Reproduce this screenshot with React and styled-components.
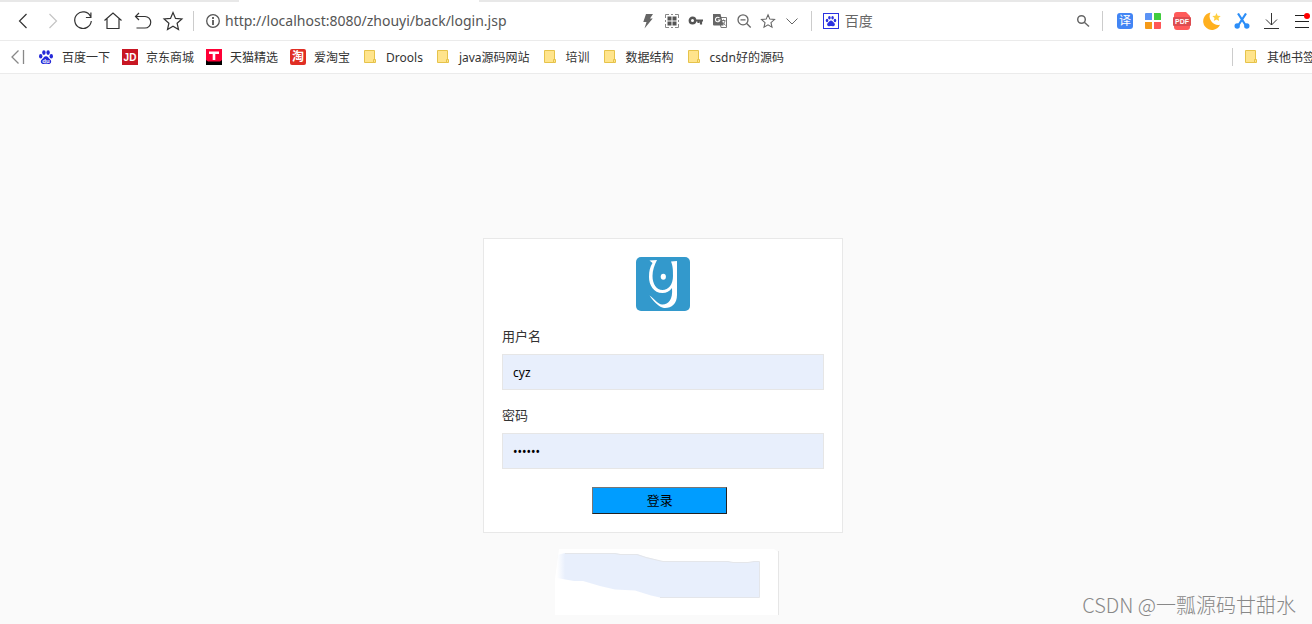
import React, { useState } from "react";
import styled, { createGlobalStyle } from "styled-components";

const navButtons = [
    { name: "后退", d: "M14.500 4 7.500 11l7 7" },
    { name: "前进", d: "M7.500 4l7 7-7 7", faded: true },
    { name: "刷新", d: "M18.500 6.500A8.300 8.300 0 1 0 19.300 11M18.900 2.500v5h-5" },
    { name: "主页", d: "M2.500 10.500 11 3l8.500 7.500M5 8.500V18.500h12V8.500" },
    { name: "恢复", d: "M7 3 3.500 6.500 7 10M3.500 6.500h9.500a5.700 5.700 0 0 1 0 11.500H4.500" },
    { name: "收藏", d: "M11 2.500l2.500 5.900 6.400.6-4.800 4.200 1.400 6.300-5.500-3.300-5.500 3.300 1.400-6.300L2.100 9l6.400-.6z" },
];

const bookmarks = [
    { text: "百度一下", icon: "baidu" },
    { text: "京东商城", icon: "jd" },
    { text: "天猫精选", icon: "tmall" },
    { text: "爱淘宝", icon: "taobao" },
    { text: "Drools", icon: "folder" },
    { text: "java源码网站", icon: "folder" },
    { text: "培训", icon: "folder" },
    { text: "数据结构", icon: "folder" },
    { text: "csdn好的源码", icon: "folder" },
];

const Paw = () => (
    <g>
        <ellipse cx="2.700" cy="7.300" rx="1.700" ry="2.200" />
        <ellipse cx="5.900" cy="3.600" rx="1.700" ry="2.300" />
        <ellipse cx="10.100" cy="3.600" rx="1.700" ry="2.300" />
        <ellipse cx="13.300" cy="7.300" rx="1.700" ry="2.200" />
        <path d="M8 7.200c2 0 2.400 1.700 3.700 2.900 1.500 1.300 1.800 2.400 1.200 3.600-.8 1.600-2.800 1.200-4.900 1.100-2.100.1-4.100.5-4.900-1.100-.6-1.200-.3-2.300 1.200-3.600C5.600 8.900 6 7.200 8 7.200z" />
    </g>
);

const SiteIcon = ({ name }) => {
    if (name === "baidu") {
        return (
            <Icon viewBox="0 0 16 16" fill="#2529d8">
                <Paw />
                <IconText x="8" y="14" fontSize="6" fill="#fff">du</IconText>
            </Icon>
        );
    }
    if (name === "jd") {
        return (
            <Icon viewBox="0 0 16 16">
                <rect width="16" height="16" fill="#c81623" />
                <IconText x="8" y="12" fontSize="10" fill="#fff">JD</IconText>
            </Icon>
        );
    }
    if (name === "tmall") {
        return (
            <Icon viewBox="0 0 16 16">
                <rect width="16" height="16" fill="#ff0036" />
                <path d="M0 16v-5l2 1.500h12l2-1.500v5z" fill="#000" />
                <path d="M3 2.500h10v2.500H9.300V11H6.700V5H3z" fill="#fff" />
            </Icon>
        );
    }
    if (name === "taobao") {
        return (
            <Icon viewBox="0 0 16 16">
                <rect width="16" height="16" rx="2" fill="#e02e24" />
                <IconText x="8" y="12" fontSize="12" fill="#fff">淘</IconText>
            </Icon>
        );
    }
    return (
        <Icon viewBox="0 0 16 16">
            <path d="M2.500 1.500h10v12h-10z" fill="#ffe48c" stroke="#e6c34a" />
            <path d="M11.500 10.500h2v3h-2z" fill="#ffe48c" stroke="#e6c34a" />
        </Icon>
    );
};

const AddressTools = () => (
    <Tools>
        <ToolButton aria-label="极速模式">
            <Icon viewBox="0 0 16 16" fill="#666">
                <path d="M6 1h7l-3 4.600h2.700L4.500 15.500l2-6.500H3.300z" />
            </Icon>
        </ToolButton>
        <ToolButton aria-label="二维码">
            <Icon viewBox="0 0 16 16" fill="none" stroke="#888">
                <path d="M1.500 5V1.500H5M11 1.500h3.500V5M14.500 11v3.500H11M5 14.500H1.500V11M7 1.500h2M7 14.500h2M1.500 7v2M14.500 7v2" />
                <path fill="#555" stroke="none" d="M3.500 3.500h4v4h-4zM8.500 3.500h4v4h-4zM3.500 8.500h4v4h-4zM8.500 8.500h4v4h-4z" />
            </Icon>
        </ToolButton>
        <ToolButton aria-label="密码">
            <Icon viewBox="0 0 16 16" fill="none" stroke="#555">
                <circle cx="4.500" cy="7.500" r="2.700" strokeWidth="2.400" />
                <path d="M7.500 7.500H15M13 8v3.500M10.500 8v2" strokeWidth="2.200" />
            </Icon>
        </ToolButton>
        <ToolButton aria-label="翻译">
            <Icon viewBox="0 0 16 16">
                <path d="M7 4.500h7.500v10H9z" fill="#fff" stroke="#777" />
                <path d="M1 1h7.500l3 11.500H2a1 1 0 0 1-1-1z" fill="#666" />
                <path d="M7.500 5A2.300 2.300 0 1 0 8 7H5.800" fill="none" stroke="#fff" strokeWidth="1.100" />
                <path d="M9.500 7.500h4M11.500 6.500v1M13 8c-.5 2-1.500 3-2.500 4M10.500 9l3 3.500" fill="none" stroke="#777" />
            </Icon>
        </ToolButton>
        <ToolButton aria-label="缩小">
            <Icon viewBox="0 0 16 16" fill="none" stroke="#666" strokeWidth="1.300">
                <circle cx="7" cy="6.800" r="5" />
                <path d="M4.500 6.800h5M10.700 10.500l4 4" />
            </Icon>
        </ToolButton>
        <ToolButton aria-label="收藏此页">
            <Icon viewBox="0 0 22 22" fill="none" stroke="#666" strokeWidth="1.500">
                <path d={navButtons[5].d} />
            </Icon>
        </ToolButton>
        <ToolButton aria-label="更多">
            <Icon viewBox="0 0 16 16" fill="none" stroke="#666">
                <path d="M2.500 5.500 8 11l5.500-5.500" />
            </Icon>
        </ToolButton>
    </Tools>
);

const Extensions = () => (
    <ExtensionBar>
        <ToolButton $compact aria-label="翻译网页">
            <Icon viewBox="0 0 16 16">
                <rect width="16" height="16" rx="3" fill="#4285f4" />
                <IconText $regular x="8" y="12" fontSize="12" fill="#fff">译</IconText>
            </Icon>
        </ToolButton>
        <ToolButton $compact aria-label="应用">
            <Icon viewBox="0 0 16 16">
                <path d="M0 1a1 1 0 0 1 1-1h6v7H0z" fill="#5b93f5" />
                <path d="M9 0h6a1 1 0 0 1 1 1v6H9z" fill="#41cc3d" />
                <path d="M0 9h7v7H1a1 1 0 0 1-1-1z" fill="#f59a18" />
                <path d="M9 9h7v6a1 1 0 0 1-1 1H9z" fill="#ff5757" />
            </Icon>
        </ToolButton>
        <ToolButton aria-label="PDF 工具">
            <Icon $size={18} viewBox="0 0 18 18">
                <path d="M4 0h9l4 4v11a3 3 0 0 1-3 3H4a3 3 0 0 1-3-3V3a3 3 0 0 1 3-3z" fill="#ff5a5a" />
                <rect y="5" width="18" height="9" rx="1" fill="#dd4c50" />
                <IconText x="9" y="12" fontSize="7" fill="#fff">PDF</IconText>
            </Icon>
        </ToolButton>
        <ToolButton aria-label="夜间模式">
            <Icon $size={18} viewBox="0 0 18 18">
                <path d="M7.500.5A8.800 8.800 0 1 0 17 12.800 8.700 8.700 0 0 1 7.500.5z" fill="#ffb01f" />
                <path d="M13.500 1l1.200 2.700 3 .3-2.200 2 .7 3-2.700-1.600L10.800 9l.7-3-2.200-2 3-.3z" fill="#ffcf40" />
            </Icon>
        </ToolButton>
        <ToolButton aria-label="截图">
            <Icon viewBox="0 0 16 16" fill="none" stroke="#2c8ef8" strokeWidth="2.200">
                <path d="M4 .5 11.500 12M12 .5 4.500 12" />
                <circle cx="3.200" cy="13" r="2.700" fill="#2c8ef8" stroke="none" />
                <circle cx="12.800" cy="13" r="2.700" fill="#2c8ef8" stroke="none" />
            </Icon>
        </ToolButton>
        <ToolButton aria-label="下载">
            <Icon viewBox="0 0 16 16" fill="none" stroke="#333">
                <path d="M7.500 0v12M2 6.500l5.500 5.500L13 6.500M0 15.500h15" />
            </Icon>
        </ToolButton>
        <ToolButton aria-label="菜单">
            <Icon viewBox="0 0 16 16" fill="none" stroke="#222">
                <path d="M1 2.500h14M1 8.500h14M1 14.500h14" />
                <circle cx="13" cy="3" r="3" fill="#f00" stroke="none" />
            </Icon>
        </ToolButton>
    </ExtensionBar>
);

const LoginForm = () => {
    const [username, setUsername] = useState("cyz");
    const [password, setPassword] = useState("123456");

    return (
        <Card onSubmit={(e) => e.preventDefault()}>
            <Logo viewBox="0 0 54 54" role="img" aria-label="logo">
                <rect width="54" height="54" rx="5" fill="#3399cc" />
                <path
                    d="M13.500 3.500 21 3c-2.500 5-4.500 10-4.500 16 0 8 4 14 10 14s10.500-5.500 10.500-14c0-6 0-9.500-2-14.500l6-.5V38c0 9-6 13.500-13 13-4.500-.5-10-6-14.500-12.500 5 3.500 9 9.500 13 9 6 0 10.500-5 9.500-16.500-2.500 3.500-5.500 5-9.500 5-9 0-13.500-8-13.500-16 0-6 1-10 3.500-14z"
                    fill="#fff"
                />
                <ellipse cx="27.300" cy="19.700" rx="2.600" ry="3" fill="#fff" />
            </Logo>
            <Label htmlFor="username">用户名</Label>
            <Input
                id="username"
                value={username}
                autoComplete="off"
                onChange={(e) => setUsername(e.target.value)}
            />
            <Label htmlFor="password">密码</Label>
            <Input
                id="password"
                type="password"
                value={password}
                autoComplete="off"
                onChange={(e) => setPassword(e.target.value)}
            />
            <LoginButton type="submit">登录</LoginButton>
        </Card>
    );
};

const App = () => {
    const [url, setUrl] = useState("http://localhost:8080/zhouyi/back/login.jsp");

    return (
        <Page>
            <GlobalStyle />
            <TabStrip>
                <ActiveTab />
            </TabStrip>
            <Toolbar>
                <NavGroup>
                    {navButtons.map((button) => (
                        <NavButton key={button.name} aria-label={button.name} $faded={button.faded}>
                            <Icon $size={22} viewBox="0 0 22 22" fill="none" stroke="currentColor" strokeWidth="1.200">
                                <path d={button.d} />
                            </Icon>
                        </NavButton>
                    ))}
                </NavGroup>
                <Divider />
                <AddressBar>
                    <Icon viewBox="0 0 16 16" fill="none" stroke="#555" strokeWidth="1.300">
                        <circle cx="8" cy="8" r="6.300" />
                        <path d="M8 7v5M8 4v2" strokeWidth="1.800" />
                    </Icon>
                    <AddressInput
                        aria-label="地址"
                        value={url}
                        onChange={(e) => setUrl(e.target.value)}
                    />
                    <AddressTools />
                </AddressBar>
                <Divider />
                <SearchBox>
                    <Icon viewBox="0 0 16 16">
                        <rect x=".5" y=".5" width="15" height="15" fill="#fff" stroke="#2b32e0" />
                        <g fill="#2b32e0" transform="translate(2 2) scale(.75)">
                            <Paw />
                        </g>
                    </Icon>
                    <SearchInput aria-label="搜索" placeholder="百度" />
                    <ToolButton aria-label="搜索">
                        <Icon viewBox="0 0 16 16" fill="none" stroke="#666" strokeWidth="1.500">
                            <circle cx="6.500" cy="6.500" r="3.800" />
                            <path d="M9.300 9.300 14 13.500" />
                        </Icon>
                    </ToolButton>
                </SearchBox>
                <Divider />
                <Extensions />
            </Toolbar>
            <BookmarkBar>
                <CollapseButton aria-label="收起">
                    <Icon viewBox="0 0 16 16" fill="none" stroke="#888" strokeWidth="1.300">
                        <path d="M8.500 1.500 2 8l6.500 6.500M13.500 1v14" />
                    </Icon>
                </CollapseButton>
                {bookmarks.map((bookmark) => (
                    <Bookmark href="#" key={bookmark.text}>
                        <SiteIcon name={bookmark.icon} />
                        <BookmarkText>{bookmark.text}</BookmarkText>
                    </Bookmark>
                ))}
                <OtherBookmarks>
                    <Bookmark href="#">
                        <SiteIcon name="folder" />
                        <BookmarkText>其他书签</BookmarkText>
                    </Bookmark>
                </OtherBookmarks>
            </BookmarkBar>
            <Main>
                <Column>
                    <LoginForm />
                    <Patch viewBox="0 0 224 66" aria-hidden="true">
                        <defs>
                            <linearGradient id="fade">
                                <stop offset="0" stopColor="#e8effc" stopOpacity="0" />
                                <stop offset=".04" stopColor="#e8effc" />
                            </linearGradient>
                        </defs>
                        <path d="M4 0h215l4 3v63H0V30z" fill="#fff" />
                        <path d="M223.500 2v64" stroke="#e6e6e6" />
                        <path
                            d="M2 6l8-2h50l5 1h17l9 3 17 4.500h65l5 1h15l6-1h5.500V48.500H105l-9-2-16-5-20-1-15-3.500-17-5H19L2 29z"
                            fill="url(#fade)"
                        />
                        <path
                            d="M10 4.500h50l5 1h17l9 3 17 4h65l5 1h15l6-1h5.500V48.500H105"
                            fill="none"
                            stroke="#e4e6ea"
                        />
                    </Patch>
                </Column>
                <Watermark>CSDN @一瓢源码甘甜水</Watermark>
            </Main>
        </Page>
    );
};

export default App;


const GlobalStyle = createGlobalStyle`
    * {
        box-sizing: border-box;
    }

    body {
        margin: 0;
        background: #fafafa;
        color: #333;
        font-family: "Noto Sans", "Noto Sans CJK SC", sans-serif;
        font-size: 12px;
    }

    button, input {
        font-family: inherit;
    }
`;

const Page = styled.div`
    display: flex;
    flex-direction: column;
    min-height: 100vh;
    overflow: hidden;
`;

const TabStrip = styled.div`
    height: 2px;
    padding-left: 239px;
    background: #e8e8e8;
`;

const ActiveTab = styled.div`
    width: 240px;
    height: 2px;
    background: #fff;
`;

const Toolbar = styled.header`
    display: flex;
    align-items: center;
    height: 39px;
    padding-left: 8px;
    background: #fff;
    border-bottom: 1px solid #ebebeb;
`;

const Icon = styled.svg`
    display: block;
    flex: none;
    width: ${({ $size }) => $size || 16}px;
    height: ${({ $size }) => $size || 16}px;
`;

const IconText = styled.text`
    font-family: "Liberation Sans", "Noto Sans CJK SC", sans-serif;
    font-weight: ${({ $regular }) => ($regular ? "normal" : "bold")};
    text-anchor: middle;
`;

const NavGroup = styled.nav`
    display: flex;
`;

const ToolButton = styled.button`
    display: flex;
    align-items: center;
    justify-content: center;
    flex: none;
    width: ${({ $compact }) => ($compact ? 22 : 24)}px;
    height: 24px;
    padding: 0;
    border: none;
    background: none;
    cursor: pointer;
`;

const NavButton = styled(ToolButton)`
    width: 30px;
    color: ${({ $faded }) => ($faded ? "#c4c4c4" : "#333")};
`;

const Divider = styled.div`
    flex: none;
    width: 1px;
    height: 20px;
    margin: 0 5px;
    background: #ccc;
`;

const AddressBar = styled.div`
    display: flex;
    align-items: center;
    flex: 11 0 0;
    gap: 4px;
    min-width: 0;
    padding: 0 2px 0 6px;
`;

const AddressInput = styled.input`
    flex: 1;
    min-width: 0;
    padding: 0;
    border: none;
    outline: none;
    background: none;
    color: #555;
    font-size: 14px;
    line-height: 20px;
`;

const Tools = styled.div`
    display: flex;
`;

const SearchBox = styled.div`
    display: flex;
    align-items: center;
    flex: 5 0 0;
    gap: 6px;
    min-width: 0;
    padding: 0 2px 0 6px;
`;

const SearchInput = styled(AddressInput)`
    &::placeholder {
        color: #666;
        opacity: 1;
    }
`;

const ExtensionBar = styled.div`
    display: flex;
    gap: 6px;
    flex: none;
    padding-left: 6px;
    margin-right: -2px;
`;

const BookmarkBar = styled.nav`
    display: flex;
    align-items: center;
    gap: 12px;
    height: 33px;
    padding-left: 10px;
    background: #fff;
    border-bottom: 1px solid #ebebeb;
    overflow: hidden;
`;

const CollapseButton = styled(ToolButton)`
    width: 16px;
`;

const Bookmark = styled.a`
    display: flex;
    align-items: center;
    flex: none;
    gap: 8px;
    color: #333;
    line-height: 16px;
    text-decoration: none;
    white-space: nowrap;
`;

const BookmarkText = styled.span`
    padding-top: 2px;
`;

const OtherBookmarks = styled.div`
    flex: none;
    width: 80px;
    margin-left: auto;
    padding-left: 10px;
    border-left: 1px solid #ccc;
`;

const Main = styled.main`
    position: relative;
    flex: 1;
    padding: 164px 0 8px 14px;
`;

const Column = styled.div`
    width: 360px;
    margin: 0 auto;
`;

const Card = styled.form`
    display: flex;
    flex-direction: column;
    padding: 18px;
    border: 1px solid #e8e8e8;
    background: #fff;
`;

const Logo = styled.svg`
    align-self: center;
    width: 54px;
    height: 54px;
    margin-bottom: 15px;
`;

const Label = styled.label`
    margin-bottom: 8px;
    font-size: 13px;
    line-height: 20px;
`;

const Input = styled.input`
    height: 36px;
    margin-bottom: 15px;
    padding: 0 10px;
    border: 1px solid #e6e6e6;
    outline: none;
    background: #e8effc;
    color: #000;
    font-size: 12px;
`;

const LoginButton = styled.button`
    width: 42%;
    height: 27px;
    margin: 3px 0 0 28%;
    padding: 0 0 2px;
    border: 1px solid;
    border-color: #767676 #222 #222 #767676;
    background: #009dff;
    color: #000;
    font-size: 13px;
    cursor: pointer;
`;

const Patch = styled.svg`
    display: block;
    width: 224px;
    height: 66px;
    margin: 16px 0 0 72px;
`;

const Watermark = styled.span`
    position: absolute;
    right: 16px;
    bottom: 6px;
    color: #888;
    font-family: "Noto Sans CJK SC", sans-serif;
    font-size: 20px;
    font-weight: 300;
    line-height: 26px;
`;
